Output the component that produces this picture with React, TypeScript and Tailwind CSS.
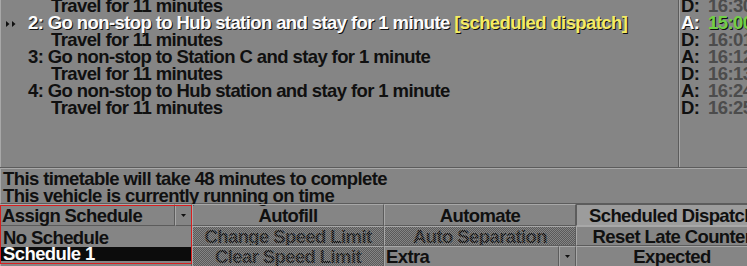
import React from "react";

const FONT = "font-['Liberation_Sans',Arial,sans-serif] font-bold text-[18.5px] leading-[17px] tracking-[-0.6px]";

function DownArrow() {
  return (
    <svg width="5" height="3" viewBox="0 0 5 3" className="block">
      <polygon points="0,0 5,0 2.5,3" fill="#101010" />
    </svg>
  );
}

function SelArrows() {
  return (
    <svg width="12" height="6" viewBox="0 0 12 6" className="absolute left-[5px] top-[7px]">
      <polygon points="0,0 3.5,3 0,6" fill="#101010" />
      <polygon points="6,0 9.5,3 6,6" fill="#101010" />
    </svg>
  );
}

function Dither() {
  return (
    <div className="absolute inset-0 bg-[repeating-conic-gradient(#5a5a5a_0%_25%,transparent_0%_50%)] bg-[length:2px_2px]" />
  );
}

function Btn({ label, disabled, lowered }: { label?: string; disabled?: boolean; lowered?: boolean }) {
  return (
    <div
      className={
        lowered
          ? "relative flex items-center justify-center overflow-hidden whitespace-nowrap bg-[#9c9c9c] border border-t-[#5c5c5c] border-l-[#5c5c5c] border-b-[#a8a8a8] border-r-[#a8a8a8] text-[#101010]"
          : "relative flex items-center justify-center overflow-hidden whitespace-nowrap border border-t-[#a8a8a8] border-l-[#a8a8a8] border-b-[#5c5c5c] border-r-[#5c5c5c] text-[#101010]"
      }
    >
      {label}
      {disabled && <Dither />}
    </div>
  );
}

function DropBtn({ label }: { label: string }) {
  return (
    <div className="flex overflow-hidden whitespace-nowrap text-[#101010]">
      <div className="flex-1 flex items-center pl-[1px] border border-t-[#a8a8a8] border-l-[#a8a8a8] border-b-[#5c5c5c] border-r-[#5c5c5c]">
        {label}
      </div>
      <div className="w-[17px] flex items-center justify-center border border-t-[#a8a8a8] border-l-[#a8a8a8] border-b-[#5c5c5c] border-r-[#5c5c5c]">
        <DownArrow />
      </div>
    </div>
  );
}

type Row = {
  kind: "travel" | "order";
  num?: string;
  text: string;
  sel?: boolean;
  tag?: string;
  ad: string;
  time: string;
};

const rows: Row[] = [
  { kind: "travel", text: "Travel for 11 minutes", ad: "D:", time: "16:30" },
  {
    kind: "order",
    num: "2:",
    text: "Go non-stop to Hub station and stay for 1 minute",
    sel: true,
    tag: "[scheduled dispatch]",
    ad: "A:",
    time: "15:00",
  },
  { kind: "travel", text: "Travel for 11 minutes", ad: "D:", time: "16:01" },
  { kind: "order", num: "3:", text: "Go non-stop to Station C and stay for 1 minute", ad: "A:", time: "16:12" },
  { kind: "travel", text: "Travel for 11 minutes", ad: "D:", time: "16:13" },
  { kind: "order", num: "4:", text: "Go non-stop to Hub station and stay for 1 minute", ad: "A:", time: "16:24" },
  { kind: "travel", text: "Travel for 11 minutes", ad: "D:", time: "16:25" },
];

export default function App() {
  return (
    <div className={`relative w-[747px] h-[266px] overflow-hidden bg-[#858585] ${FONT}`}>
      <div className="w-[768px] flex flex-col">
        {/* order list panel */}
        <div className="h-[168px] flex border-b border-b-[#5c5c5c] overflow-hidden">
          <div className="w-[679px] border-l border-l-[#a8a8a8] border-r border-r-[#5c5c5c] overflow-hidden">
            <div className="mt-[-3px] flex flex-col">
              {rows.map((r, i) => (
                <div key={i} className="relative h-[17px] whitespace-nowrap">
                  {r.sel && <SelArrows />}
                  {r.kind === "travel" ? (
                    <div className="pl-[50px] text-[#101010]">{r.text}</div>
                  ) : r.sel ? (
                    <div className="pl-[27px] text-[#fcfcfc] [text-shadow:1px_1px_0_#101010]">
                      {r.num} {r.text}{" "}
                      <span className="text-[#f4ec64]">{r.tag}</span>
                    </div>
                  ) : (
                    <div className="pl-[27px] text-[#101010]">
                      {r.num} {r.text}
                    </div>
                  )}
                </div>
              ))}
            </div>
          </div>
          <div className="flex-1 border-l border-l-[#a8a8a8] overflow-hidden">
            <div className="mt-[-3px] flex flex-col pl-[1px]">
              {rows.map((r, i) => (
                <div key={i} className="h-[17px] flex whitespace-nowrap">
                  <span
                    className={
                      r.sel
                        ? "w-[27px] text-[#fcfcfc] [text-shadow:1px_1px_0_#101010]"
                        : "w-[27px] text-[#101010]"
                    }
                  >
                    {r.ad}
                  </span>
                  <span
                    className={
                      r.sel
                        ? "text-[#70d048] [text-shadow:1px_1px_0_#101010]"
                        : "text-[#4c4c4c]"
                    }
                  >
                    {r.time}
                  </span>
                </div>
              ))}
            </div>
          </div>
        </div>

        {/* summary panel */}
        <div className="h-[36px] pt-[1px] pl-[2px] border-t border-t-[#a8a8a8] border-l border-l-[#a8a8a8] border-b border-b-[#5c5c5c] text-[#101010] whitespace-nowrap">
          <div className="h-[17px]">This timetable will take 48 minutes to complete</div>
          <div className="h-[17px]">This vehicle is currently running on time</div>
        </div>

        {/* buttons */}
        <div className="grid grid-cols-[192px_192px_192px_192px] grid-rows-[22px_20px_21px]">
          <DropBtn label="Assign Schedule" />
          <Btn label="Autofill" />
          <Btn label="Automate" />
          <Btn label="Scheduled Dispatch" lowered />

          <Btn />
          <Btn label="Change Speed Limit" disabled />
          <Btn label="Auto Separation" disabled />
          <Btn label="Reset Late Counter" />

          <Btn />
          <Btn label="Clear Speed Limit" disabled />
          <DropBtn label="Extra" />
          <Btn label="Expected" />
        </div>
      </div>

      {/* open dropdown menu */}
      <div className="absolute left-0 top-[226px] w-[192px] h-[38px] bg-[#858585] pt-[3px] whitespace-nowrap">
        <div className="h-[17px] pl-[3px] text-[#101010]">No Schedule</div>
        <div className="mt-[1px] mx-[1px] h-[14px] leading-[14px] pl-[2px] bg-[#0c0c0c] text-[#fcfcfc]">
          Schedule 1
        </div>
      </div>
      <div className="absolute left-0 top-[205px] w-[192px] h-[59px] border border-[#d81e1e] pointer-events-none" />
    </div>
  );
}
